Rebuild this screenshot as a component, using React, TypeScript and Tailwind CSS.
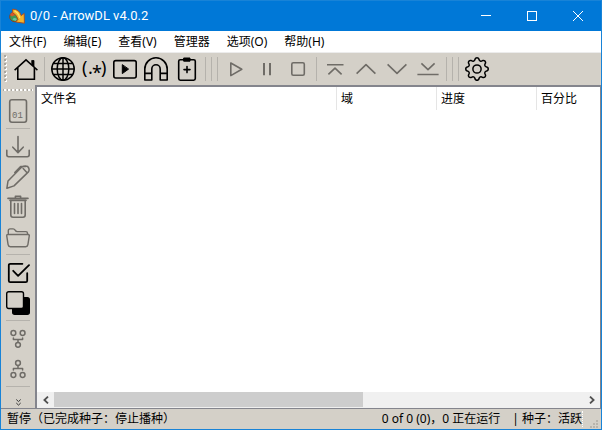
import type { ReactNode } from "react";
import { BsGear } from "react-icons/bs";

const menus = ["文件(F)", "编辑(E)", "查看(V)", "管理器", "选项(O)", "帮助(H)"];

const columns = [
  { label: "文件名", width: "w-[300px]" },
  { label: "域", width: "w-[100px]" },
  { label: "进度", width: "w-[100px]" },
  { label: "百分比", width: "" },
];

function Icon({ children, width = 1.6 }: { children: ReactNode; width?: number }) {
  return (
    <svg
      viewBox="0 0 24 24"
      className="block size-6 shrink-0"
      fill="none"
      stroke="currentColor"
      strokeWidth={width}
      strokeLinecap="round"
      strokeLinejoin="round"
      aria-hidden="true"
    >
      {children}
    </svg>
  );
}

type ToolProps = { label: string; disabled?: boolean; children: ReactNode };

/* horizontal toolbar button */
function Tool({ label, disabled, children }: ToolProps) {
  return (
    <button
      type="button"
      aria-label={label}
      disabled={disabled}
      className="flex w-[31px] shrink-0 items-center pl-[3px] text-black disabled:text-[#6f6c67]"
    >
      {children}
    </button>
  );
}

/* vertical toolbar button */
function SideTool({ label, disabled, children }: ToolProps) {
  return (
    <button
      type="button"
      aria-label={label}
      disabled={disabled}
      className="flex h-[30px] w-full shrink-0 justify-center pt-[3px] text-black disabled:text-[#6f6c67]"
    >
      {children}
    </button>
  );
}

function Sep() {
  return (
    <div className="h-6 w-1.5 shrink-0 pl-0.5">
      <div className="h-full w-px bg-[#b5b2ac]" />
    </div>
  );
}

function SideSep() {
  return (
    <div className="h-1.5 w-full shrink-0 px-[5px] pt-0.5">
      <div className="h-px bg-[#b5b2ac]" />
    </div>
  );
}

function AppLogo() {
  return (
    <svg viewBox="0 0 16 16" className="size-4" aria-hidden="true">
      <circle cx="5.6" cy="8.8" r="4.9" fill="#3f9a55" stroke="#8f3d1c" strokeWidth="1" />
      <path d="M1 7 Q2 4 6 3.5 L6 7 L3 8.5 Z" fill="#d9572b" />
      <path d="M3.5 11.5 Q5 9 8 11 L6.5 13 Z" fill="#6cc3a0" />
      <path
        d="M3.5 1.2 Q10 0.8 12.2 7.6 L15.2 5.4 L15.4 15.2 L6.6 14 L9 11.4 Q7.4 6.4 3.8 4.8 Z"
        fill="#f3b52c"
        stroke="#a8471c"
        strokeWidth="0.9"
      />
      <path d="M5.5 2.8 Q9.4 4.4 10.8 10" fill="none" stroke="#ffe26b" strokeWidth="1.3" />
    </svg>
  );
}

function TitleBar() {
  return (
    <header className="flex h-[31px] shrink-0 items-center border-t border-[#1883d7] bg-[#0078d7] pl-2 text-white">
      <AppLogo />
      <h1 className="ml-[5px] flex-1 font-[Roboto] text-[13px] leading-4">0/0 - ArrowDL v4.0.2</h1>
      <button type="button" aria-label="最小化" className="flex h-full w-[46px] items-center justify-center">
        <svg viewBox="0 0 10 10" className="size-2.5" stroke="currentColor">
          <path d="M0 4.5H10" />
        </svg>
      </button>
      <button type="button" aria-label="最大化" className="flex h-full w-[46px] items-center justify-center">
        <svg viewBox="0 0 10 10" className="size-2.5" stroke="currentColor" fill="none">
          <rect x="0.5" y="0.5" width="9" height="9" />
        </svg>
      </button>
      <button type="button" aria-label="关闭" className="flex h-full w-[46px] items-center justify-center">
        <svg viewBox="0 0 10 10" className="size-2.5" stroke="currentColor">
          <path d="M0 0L10 10M10 0L0 10" />
        </svg>
      </button>
    </header>
  );
}

function MainToolbar() {
  return (
    <div role="toolbar" className="flex h-8 shrink-0 items-center pl-[3px]">
      <svg viewBox="0 0 3 28" className="mr-1 h-7 w-[3px] shrink-0" aria-hidden="true">
        {[0, 4, 8, 12, 16, 20, 24].map((y) => (
          <g key={y}>
            <rect x="1" y={y + 1} width="2" height="2" fill="#fff" />
            <rect x="0" y={y} width="2" height="2" fill="#aaa69f" />
          </g>
        ))}
      </svg>
      <Tool label="主页">
        <Icon>
          <path d="M1.2 12.5L12 2.8l10.8 9.7M3.8 10.8V22.2H20.4V10.8" strokeLinecap="square" strokeLinejoin="miter" />
          <path d="M18 3.5h2V9.5L18 7.8z" fill="currentColor" strokeWidth="0.8" />
        </Icon>
      </Tool>
      <Sep />
      <Tool label="网页内容">
        <Icon width={1.5}>
          <circle cx="12" cy="12" r="11.2" />
          <ellipse cx="12" cy="12" rx="5.8" ry="11.2" />
          <path d="M12 1v22M1 12h22M2.6 6.5h18.8M2.6 17.5h18.8" />
        </Icon>
      </Tool>
      <Tool label="批量下载">
        <svg viewBox="0 0 24 24" className="block size-6 shrink-0 overflow-visible" fill="currentColor">
          <text x="0 6 10 19" y="17 17 22 17" fontSize="18">
            (.*)
          </text>
        </svg>
      </Tool>
      <Tool label="下载视频">
        <Icon>
          <rect x="0.8" y="3.6" width="22.4" height="17.4" rx="2" />
          <path d="M9.3 8v8.6l6-4.3z" fill="currentColor" strokeWidth="1" />
        </Icon>
      </Tool>
      <Tool label="磁力链接">
        <Icon>
          <path d="M0.8 23V12a11.2 11.2 0 0 1 22.4 0v11h-7V12a4.2 4.2 0 0 0-8.4 0v11zM0.8 16.4h7M16.2 16.4h7" />
        </Icon>
      </Tool>
      <Tool label="粘贴链接">
        <Icon>
          <rect x="3.7" y="2.7" width="16.6" height="20.5" rx="1.6" />
          <path d="M9 1h6v3.2H9z" fill="currentColor" strokeWidth="1" />
          <path d="M12 9.6v6M9 12.6h6" />
        </Icon>
      </Tool>
      <Sep />
      <Sep />
      <Sep />
      <Tool label="开始" disabled>
        <Icon>
          <path d="M6.8 6v12.6L17.8 12.3z" />
        </Icon>
      </Tool>
      <Tool label="暂停" disabled>
        <Icon width={2}>
          <path d="M9 6v12.2M15 6v12.2" strokeLinecap="butt" />
        </Icon>
      </Tool>
      <Tool label="停止" disabled>
        <Icon>
          <rect x="5.8" y="5.8" width="12.5" height="12.5" rx="1.5" />
        </Icon>
      </Tool>
      <Sep />
      <Tool label="置顶" disabled>
        <Icon>
          <path d="M4 7.8h16.5M5.4 17.4L12 11.2l6.6 6.2" strokeLinecap="butt" />
        </Icon>
      </Tool>
      <Tool label="上移" disabled>
        <Icon>
          <path d="M2.6 16.6L12 7.6l9.4 9" strokeLinecap="butt" />
        </Icon>
      </Tool>
      <Tool label="下移" disabled>
        <Icon>
          <path d="M2.6 7.4L12 16.4l9.4-9" strokeLinecap="butt" />
        </Icon>
      </Tool>
      <Tool label="置底" disabled>
        <Icon>
          <path d="M1.4 17.5h21.2M5.4 6.4L12 12.6l6.6-6.2" strokeLinecap="butt" />
        </Icon>
      </Tool>
      <Sep />
      <Sep />
      <Sep />
      <Tool label="首选项">
        <BsGear className="size-6 shrink-0" />
      </Tool>
    </div>
  );
}

function SideToolbar() {
  return (
    <div role="toolbar" aria-orientation="vertical" className="flex w-[34px] shrink-0 flex-col items-center pt-1">
      <svg viewBox="0 0 30 3" className="mb-1 h-[3px] w-[30px] shrink-0" aria-hidden="true">
        {[0, 4, 8, 12, 16, 20, 24, 28].map((x) => (
          <g key={x}>
            <rect x={x} y="0" width="2" height="2" fill="#aaa69f" />
            <rect x={x + 1} y="0" width="2" height="2" fill="#fff" />
          </g>
        ))}
      </svg>
      <SideTool label="信息" disabled>
        <Icon>
          <rect x="3.7" y="0.8" width="16.8" height="22.4" rx="2.2" />
          <text
            x="6"
            y="19.3"
            fontSize="9"
            fill="currentColor"
            stroke="none"
            className="font-['Liberation_Mono']"
          >
            01
          </text>
        </Icon>
      </SideTool>
      <SideSep />
      <SideTool label="打开文件" disabled>
        <Icon>
          <path d="M12 1.5v15.8M6.8 12.2l5.2 5.4 5.2-5.4M0.8 15.2v4.6q0 1.9 1.9 1.9h18.6q1.9 0 1.9-1.9v-4.6" />
        </Icon>
      </SideTool>
      <SideTool label="重命名" disabled>
        <Icon width={1.5}>
          <path d="M0.9 23.2L2 16 15.5 2.3q3.2-2.2 6.2-.8 2.4 2.8.7 5.4L8 20.9zM17.2 3.6l3.4 3.6M8.8 7.5l5.8-6.1h5" />
        </Icon>
      </SideTool>
      <SideTool label="删除文件" disabled>
        <Icon>
          <path d="M2 3.4h20M9.4 3V1.2h5.2V3M4 5.4h16M4.8 5.5V20q0 2.2 2.2 2.2h10q2.2 0 2.2-2.2V5.5M8.5 8.5v10M12 8.5v10M15.5 8.5v10" />
        </Icon>
      </SideTool>
      <SideTool label="打开目录" disabled>
        <Icon width={1.4}>
          <path d="M2.3 9.5V5.7q0-1.8 1.8-1.8h3q1.3 0 2 1.2.9 1.5 2.2 1.5h8.6q1.6 0 1.6 1.6v1.3M1.6 9.5h20.8q1 0 .9 1.2l-1.4 9q-.3 2-2.2 2H4.3q-1.9 0-2.2-2l-1.4-9q0-1.2.9-1.2z" />
        </Icon>
      </SideTool>
      <SideSep />
      <SideTool label="全选">
        <Icon width={1.8}>
          <path d="M16.4 2.8H4.3q-1.5 0-1.5 1.5v15.4q0 1.5 1.5 1.5h15.4q1.5 0 1.5-1.5v-7.5M7.2 9.8l4.9 5L23 4.2" />
        </Icon>
      </SideTool>
      <SideTool label="反选">
        <Icon width={1.4}>
          <rect x="6.7" y="6.7" width="16.6" height="16.6" rx="2" fill="currentColor" />
          <rect x="0.7" y="0.7" width="16.8" height="16.8" rx="2" fill="#d4d0c8" />
        </Icon>
      </SideTool>
      <SideSep />
      <SideTool label="合并" disabled>
        <Icon width={1.5}>
          <circle cx="7.4" cy="6" r="2.4" />
          <circle cx="16.6" cy="6" r="2.4" />
          <circle cx="12" cy="17.8" r="2.4" />
          <path d="M7.4 11v1.6h9.2V11M12 12.6v2.6" />
        </Icon>
      </SideTool>
      <SideTool label="拆分" disabled>
        <Icon width={1.5}>
          <circle cx="12" cy="6" r="2.4" />
          <circle cx="7.4" cy="18" r="2.4" />
          <circle cx="16.6" cy="18" r="2.4" />
          <path d="M7.4 13v-1.6h9.2V13M12 11.4V8.6" />
        </Icon>
      </SideTool>
      <SideSep />
      <button type="button" aria-label="更多" className="mt-auto flex h-3 w-full justify-center pt-[3px]">
        <svg viewBox="0 0 5 7" className="h-[7px] w-[5px]" fill="none" stroke="#333">
          <path d="M0.3 0.5L2.5 2.6 4.7 0.5M0.3 4L2.5 6.1 4.7 4" />
        </svg>
      </button>
    </div>
  );
}

function DownloadList() {
  return (
    <main className="flex min-w-0 flex-1 flex-col border-t-2 border-r border-l-2 border-[#84858d] bg-white">
      <div className="flex-1 overflow-hidden">
        <table className="w-full table-fixed border-separate border-spacing-0 text-left">
          <thead>
            <tr className="h-[23px]">
              {columns.map((col) => (
                <th
                  key={col.label}
                  scope="col"
                  className={`${col.width} border-r border-[#e5e5e5] p-0 pl-1 font-normal whitespace-nowrap last:border-r-0`}
                >
                  {col.label}
                </th>
              ))}
            </tr>
          </thead>
          <tbody />
        </table>
      </div>
      <div className="flex h-4 shrink-0 bg-[#f0f0f0]">
        <button type="button" aria-label="向左滚动" className="flex w-[17px] items-center justify-center">
          <svg viewBox="0 0 6 8" className="h-2 w-1.5" fill="none" stroke="#505050" strokeWidth="1.8">
            <path d="M5 0.6L1.4 4 5 7.4" />
          </svg>
        </button>
        <div className="flex-1">
          <div className="h-[15px] w-[58.5%] bg-[#cdcdcd]" />
        </div>
        <button type="button" aria-label="向右滚动" className="flex w-[17px] items-center justify-center">
          <svg viewBox="0 0 6 8" className="h-2 w-1.5" fill="none" stroke="#505050" strokeWidth="1.8">
            <path d="M1 0.6L4.6 4 1 7.4" />
          </svg>
        </button>
      </div>
    </main>
  );
}

function StatusBar() {
  return (
    <footer className="flex h-[21px] shrink-0 items-center border-t border-[#84858d] pl-1.5 whitespace-nowrap">
      <span className="flex-1">暂停（已完成种子：停止播种）</span>
      <span className="mr-3">0 of 0 (0)，0 正在运行</span>
      <span className="border-r border-dotted border-white">| 种子：活跃</span>
      <svg viewBox="0 0 10 10" className="mr-0.5 ml-1.5 size-2.5 self-end" fill="#b8b4ac" aria-hidden="true">
        <path d="M7 1h2v2H7zM4 4h2v2H4zM7 4h2v2H7zM1 7h2v2H1zM4 7h2v2H4zM7 7h2v2H7z" />
      </svg>
    </footer>
  );
}

export default function App() {
  return (
    <div className="flex h-screen flex-col border-x border-b border-[#1883d7] bg-[#d4d0c8] font-['Noto_Sans','Noto_Sans_CJK_SC',sans-serif] text-xs text-black">
      <TitleBar />
      <nav className="flex h-[22px] shrink-0 items-center gap-[17px] border-b border-[#ececec] bg-white pl-2">
        {menus.map((menu) => (
          <button key={menu} type="button" className="leading-4">
            {menu}
          </button>
        ))}
      </nav>
      <MainToolbar />
      <div className="flex min-h-0 flex-1">
        <SideToolbar />
        <DownloadList />
      </div>
      <StatusBar />
    </div>
  );
}
